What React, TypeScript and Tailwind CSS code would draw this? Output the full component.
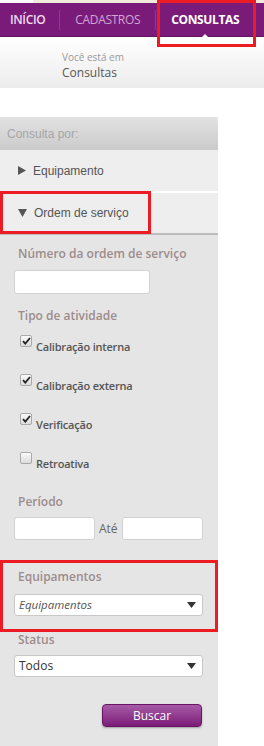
import React from 'react'

const font = { fontFamily: '"Open Sans", "Noto Sans", sans-serif' }
const arial = { fontFamily: '"Liberation Sans", Arial, sans-serif' }

function Caret() {
    return (
        <svg width="9" height="6" viewBox="0 0 9 6" className="shrink-0">
            <path d="M0 0 L9 0 L4.5 6 Z" fill="#333" />
        </svg>
    )
}

function Check({ checked }: { checked: boolean }) {
    return (
        <div className="w-[12px] h-[12px] rounded-[2px] border border-[#a9a9a9] bg-gradient-to-b from-[#fafafa] to-[#dcdcdc] flex items-center justify-center shrink-0">
            {checked && (
                <svg width="9" height="8" viewBox="0 0 9 8">
                    <path d="M1 4.2 L3.3 6.6 L8 1" stroke="#222" strokeWidth="1.8" fill="none" />
                </svg>
            )}
        </div>
    )
}

const activities = [
    { label: 'Calibração interna', checked: true },
    { label: 'Calibração externa', checked: true },
    { label: 'Verificação', checked: true },
    { label: 'Retroativa', checked: false },
]

export default function App() {
    return (
        <div className="relative w-[264px] h-[746px] bg-white overflow-hidden" style={font}>
            {/* top strip */}
            <div className="flex h-[3px]">
                <div className="w-[33px] bg-white"></div>
                <div className="flex-1 bg-[#efeadb]"></div>
            </div>

            {/* Nav */}
            <div className="relative h-[34px] bg-[#7a1b79] border-b border-[#5e1260] flex items-center text-[12px] tracking-[-0.35px]">
                <div className="pl-[10px] pr-[14px] text-[#f0dcef] font-semibold">INÍCIO</div>
                <div className="w-px h-[20px] bg-[#8e3a8d]"></div>
                <div className="px-[15px] text-[#cfa6d2]">CADASTROS</div>
                <div className="w-px h-[20px] bg-[#8e3a8d]"></div>
                <div className="relative px-[15px] text-white font-bold">
                    CONSULTAS
                    <div className="absolute left-1/2 -translate-x-1/2 top-[23px] w-0 h-0 border-l-[4px] border-r-[4px] border-b-[4px] border-l-transparent border-r-transparent border-b-white"></div>
                </div>
            </div>

            {/* Breadcrumb */}
            <div className="h-[51px] bg-gradient-to-b from-white to-[#ececec] pl-[62px] pt-[14px]">
                <div className="text-[10px] leading-[13px] text-[#9a9a9a]">Você está em</div>
                <div className="text-[12px] leading-[17px] text-[#555]">Consultas</div>
            </div>

            <div className="h-[29px]"></div>

            {/* Sidebar */}
            <div className="w-[218px] h-[629px] bg-[#e5e5e5] flex flex-col">
                <div className="h-[33px] rounded-tr-[6px] bg-gradient-to-b from-[#e2e2e2] to-[#cbcbcb] flex items-center pl-[7px] text-[12px] text-[#a6a6a6]" style={arial}>
                    Consulta por:
                </div>
                <div className="h-[41px] bg-[#eeeeee] flex items-center pl-[18px] text-[12px] text-[#555] gap-[7px]" style={arial}>
                    <svg width="8" height="9" viewBox="0 0 8 9"><path d="M0 0 L8 4.5 L0 9 Z" fill="#555" /></svg>
                    Equipamento
                </div>
                <div className="h-[2px] bg-white"></div>
                <div className="h-[40px] bg-[#eeeeee] flex items-center pl-[18px] text-[12px] text-[#555] gap-[7px]" style={arial}>
                    <svg width="9" height="8" viewBox="0 0 9 8"><path d="M0 0 L9 0 L4.5 8 Z" fill="#555" /></svg>
                    Ordem de serviço
                </div>
                <div className="h-[2px] bg-[#bdbdbd]"></div>

                <div className="flex flex-col px-[14px] pt-[10px]">
                    <div className="text-[12px] font-semibold text-[#9c8c8c] pl-[4px] leading-[18px]">Número da ordem de serviço</div>
                    <div className="mt-[7px] w-[136px] h-[24px] bg-white border border-[#d2d2d2] rounded-[3px]"></div>

                    <div className="mt-[13px] text-[12px] font-semibold text-[#9c8c8c] pl-[4px] leading-[18px]">Tipo de atividade</div>
                    <div className="flex flex-col mt-[10px] gap-[22px] pl-[6px]">
                        {activities.map((a) => (
                            <div key={a.label} className="flex items-start gap-[4px] h-[17px]">
                                <Check checked={a.checked} />
                                <span className="mt-[5px] text-[11px] tracking-[-0.2px] font-semibold text-[#555] leading-[14px]">{a.label}</span>
                            </div>
                        ))}
                    </div>

                    <div className="mt-[24px] text-[12px] font-semibold text-[#9c8c8c] pl-[4px] leading-[18px]">Período</div>
                    <div className="mt-[6px] flex items-center gap-[4px]">
                        <div className="w-[81px] h-[23px] bg-white border border-[#d2d2d2] rounded-[3px]"></div>
                        <span className="text-[12px] text-[#666]">Até</span>
                        <div className="w-[81px] h-[23px] bg-white border border-[#d2d2d2] rounded-[3px]"></div>
                    </div>

                    <div className="mt-[28px] text-[12px] font-semibold text-[#9c8c8c] pl-[4px] leading-[18px]">Equipamentos</div>
                    <div className="mt-[8px] w-[189px] h-[22px] bg-white border border-[#c8c8c8] rounded-[3px] flex items-center justify-between pl-[4px] pr-[6px]">
                        <span className="italic text-[11.5px] text-[#555]">Equipamentos</span>
                        <Caret />
                    </div>

                    <div className="mt-[15px] text-[12px] font-semibold text-[#9c8c8c] pl-[4px] leading-[18px]">Status</div>
                    <div className="mt-[6px] w-[189px] h-[22px] bg-white border border-[#c8c8c8] rounded-[3px] flex items-center justify-between pl-[4px] pr-[6px]">
                        <span className="text-[12px] text-[#333]">Todos</span>
                        <Caret />
                    </div>

                    <div className="mt-[27px] flex justify-end pr-[2px] w-[190px]">
                        <button className="w-[100px] h-[23px] rounded-[4px] border border-[#6a1468] bg-gradient-to-b from-[#a75aa6] to-[#7b1b79] text-white text-[12px] shadow-[0_1px_2px_rgba(0,0,0,0.3)]">
                            Buscar
                        </button>
                    </div>
                </div>
            </div>

            {/* annotation boxes */}
            <div className="absolute left-[157px] top-0 w-[99px] h-[47px] border-[3px] border-[#ed1c24]"></div>
            <div className="absolute left-0 top-[191px] w-[151px] h-[43px] border-[3px] border-[#ed1c24]"></div>
            <div className="absolute left-0 top-[560px] w-[218px] h-[72px] border-[3px] border-[#ed1c24]"></div>
        </div>
    )
}
